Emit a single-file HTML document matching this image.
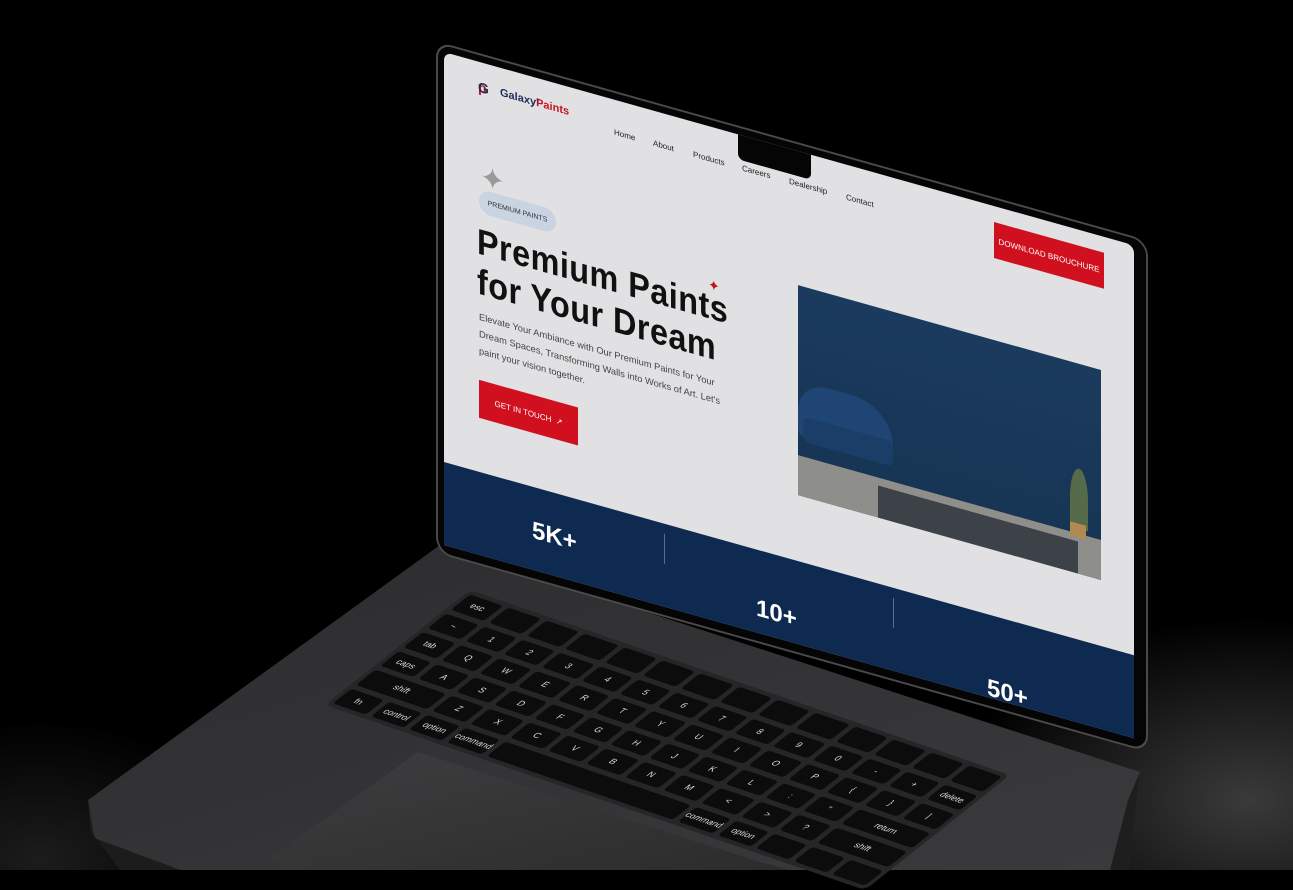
<!DOCTYPE html>
<html><head><meta charset="utf-8"><style>
html,body{margin:0;padding:0;width:1293px;height:870px;overflow:hidden;background:#000;font-family:"Liberation Sans",sans-serif}
.abs{position:absolute}
#bg{left:0;top:0;width:1293px;height:870px;background:radial-gradient(ellipse 420px 260px at 1250px 800px,#3a3a3a,rgba(0,0,0,0) 70%),radial-gradient(ellipse 300px 200px at 40px 860px,#1c1c1c,rgba(0,0,0,0) 70%),#000}
.sk{transform-origin:0 0;transform:matrix(1,0.28,0,1,0,0)}
#bezel{left:436px;top:41px;width:712px;height:512px;background:#050505;border:2px solid #4a4a4a;border-radius:16px;box-sizing:border-box}
#screen{left:444px;top:52px;width:690px;height:493px;background:#e1e1e3;overflow:hidden;border-radius:8px 8px 0 0}
#screen *{position:absolute}
.nav{font-size:8px;color:#222;top:28px}
#blue{left:0;top:410px;width:690px;height:100px;background:#0e2a50}
.stat{color:#fff;font-weight:bold;font-size:24px}
#kb{left:470px;top:590px;width:540px;height:150px;transform-origin:0 0;transform:matrix(1,0.3426,-0.967,0.767,0,0);display:grid;grid-template-columns:repeat(14,1fr);grid-template-rows:repeat(6,1fr);gap:5px;background:#262628;padding:4px;box-sizing:border-box;border-radius:6px}
.k{background:#0c0c0c;border-radius:3px;color:#ddd;font-size:8px;display:flex;align-items:center;justify-content:center}
</style></head><body>
<div id="bg" class="abs"></div>
<svg class="abs" style="left:0;top:0" width="1293" height="870">
<defs><linearGradient id="dg" x1="0" y1="0" x2="1" y2="1"><stop offset="0" stop-color="#2c2c2e"/><stop offset="1" stop-color="#3a3a3c"/></linearGradient>
<linearGradient id="tp" x1="0" y1="0" x2="1" y2="1"><stop offset="0" stop-color="#3e3e40"/><stop offset="1" stop-color="#2c2c2d"/></linearGradient></defs>
<polygon points="440,545 1140,772 1128,870 180,870 94,838 88,800" fill="url(#dg)"/>
<polygon points="88,800 94,838 180,870 120,870 90,830" fill="#1c1c1d"/>
<polygon points="418,752 760,862 790,870 600,870 285,870 270,858" fill="url(#tp)"/>
<polygon points="1128,800 1140,772 1128,870 1110,870" fill="#1e1e1f"/>
</svg>
<div id="kb" class="abs">
<div class="k">esc</div><div class="k"></div><div class="k"></div><div class="k"></div><div class="k"></div><div class="k"></div><div class="k"></div><div class="k"></div><div class="k"></div><div class="k"></div><div class="k"></div><div class="k"></div><div class="k"></div><div class="k"></div>
<div class="k">~</div><div class="k">1</div><div class="k">2</div><div class="k">3</div><div class="k">4</div><div class="k">5</div><div class="k">6</div><div class="k">7</div><div class="k">8</div><div class="k">9</div><div class="k">0</div><div class="k">-</div><div class="k">+</div><div class="k">delete</div>
<div class="k">tab</div><div class="k">Q</div><div class="k">W</div><div class="k">E</div><div class="k">R</div><div class="k">T</div><div class="k">Y</div><div class="k">U</div><div class="k">I</div><div class="k">O</div><div class="k">P</div><div class="k">{</div><div class="k">}</div><div class="k">|</div>
<div class="k">caps</div><div class="k">A</div><div class="k">S</div><div class="k">D</div><div class="k">F</div><div class="k">G</div><div class="k">H</div><div class="k">J</div><div class="k">K</div><div class="k">L</div><div class="k">:</div><div class="k">"</div><div class="k" style="grid-column:span 2">return</div>
<div class="k" style="grid-column:span 2">shift</div><div class="k">Z</div><div class="k">X</div><div class="k">C</div><div class="k">V</div><div class="k">B</div><div class="k">N</div><div class="k">M</div><div class="k">&lt;</div><div class="k">&gt;</div><div class="k">?</div><div class="k" style="grid-column:span 2">shift</div>
<div class="k">fn</div><div class="k">control</div><div class="k">option</div><div class="k">command</div><div class="k" style="grid-column:span 5"></div><div class="k">command</div><div class="k">option</div><div class="k"></div><div class="k"></div><div class="k"></div>
</div>
<div id="bezel" class="abs sk"></div>
<div id="screen" class="abs sk">
 <div style="left:34px;top:17px;font-size:14px;font-weight:bold;color:#c8101e;letter-spacing:-3px"><span style="color:#1b2c55">G</span>p</div>
 <div style="left:56px;top:19px;font-size:11px;font-weight:bold;color:#1b2c55;white-space:nowrap">Galaxy <span style="color:#c8101e">Paints</span><sup style="font-size:4px">®</sup></div>
 <div class="nav" style="left:170px">Home</div>
 <div class="nav" style="left:209px">About</div>
 <div class="nav" style="left:249px">Products</div>
 <div class="nav" style="left:298px">Careers</div>
 <div class="nav" style="left:345px">Dealership</div>
 <div class="nav" style="left:402px">Contact</div>
 <div style="left:294px;top:-5px;width:73px;height:30px;background:#050505;border-radius:0 0 6px 6px"></div>
 <div style="left:550px;top:16px;width:110px;height:36px;background:#d0101e;color:#fff;font-size:8px;display:flex;align-items:center;justify-content:center">DOWNLOAD BROUCHURE</div>
 <div style="left:36px;top:100px;font-size:30px;color:#999;line-height:1">✦</div>
 <div style="left:35px;top:127px;width:77px;height:24px;border-radius:12px;background:#c9d3e2;font-size:7px;color:#333;display:flex;align-items:center;justify-content:center">PREMIUM PAINTS</div>
 <div style="left:33px;top:160px;font-size:36px;font-weight:bold;color:#111;line-height:40px;letter-spacing:0.5px;white-space:nowrap;transform:scaleX(.9);transform-origin:0 0">Premium Paints<br>for Your Dream</div>
 <div style="left:264px;top:150px;font-size:14px;color:#c8101e">✦</div>
 <div style="left:35px;top:247px;width:262px;font-size:9.3px;line-height:17px;color:#444">Elevate Your Ambiance with Our Premium Paints for Your Dream Spaces, Transforming Walls into Works of Art. Let's paint your vision together.</div>
 <div style="left:35px;top:318px;width:99px;height:38px;background:#d0101e;color:#fff;font-size:8px;display:flex;align-items:center;justify-content:center">GET IN TOUCH &nbsp;↗</div>
 <div id="blue"></div>
 <div style="left:220px;top:420px;width:1px;height:30px;background:#5a6e8c"></div>
 <div style="left:449px;top:420px;width:1px;height:30px;background:#5a6e8c"></div>
 <div class="stat" style="left:88px;top:440px">5K+</div>
 <div class="stat" style="left:312px;top:455px">10+</div>
 <div class="stat" style="left:543px;top:470px">50+</div>
 <div style="left:354px;top:134px;width:303px;height:210px;background:linear-gradient(#1b3b5e,#163352);overflow:hidden">
  <div style="left:0;top:170px;width:303px;height:50px;background:#8e8e8a"></div>
  <div style="left:80px;top:178px;width:200px;height:40px;background:#3d4148"></div>
  <div style="left:0;top:95px;width:95px;height:55px;background:#1e4573;border-radius:30px 40px 6px 6px"></div>
  <div style="left:5px;top:130px;width:90px;height:25px;background:#1a3e68;border-radius:6px"></div>
  <div style="left:272px;top:105px;width:18px;height:60px;background:#556b4a;border-radius:50% 50% 0 0"></div>
  <div style="left:272px;top:160px;width:16px;height:14px;background:#b08a50"></div>
 </div>
</div>
</body></html>
